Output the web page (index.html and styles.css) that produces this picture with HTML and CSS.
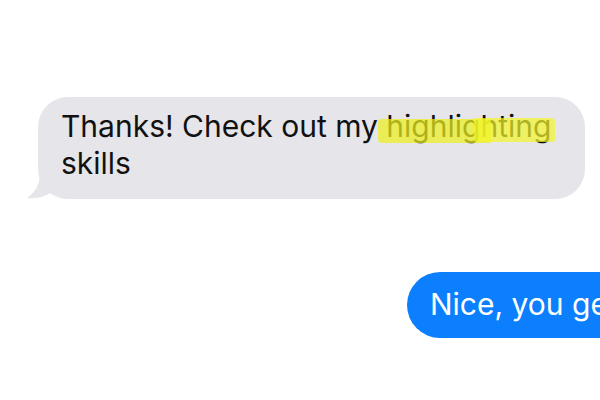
FILE: index.html
```html
<!DOCTYPE html>
<html lang="en">
<head>
  <meta charset="UTF-8" />
  <title>Messages</title>
  <link rel="stylesheet" href="styles.css">
</head>
<body>
  <div class="thread">
    <div class="msg msg-in">
      <p class="bubble">Thanks! Check out my<span class="marker"> highlighting</span> skills</p>
      <svg class="tail" width="30" height="30" viewBox="0 0 30 30">
        <path d="M14 0 C14 12 10 20 1 26 C10 27 18 25 26 20 L26 0 Z" fill="#e5e5ea"/>
      </svg>
    </div>
    <div class="msg msg-out">
      <p class="bubble">Nice, you get the hang of it</p>
    </div>
  </div>
</body>
</html>
```

FILE: styles.css
```css
body {
  margin: 0;
  background-color: #ffffff;
  font-family: Inter, "Noto Sans", sans-serif;
  overflow: hidden;
  width: 600px;
  height: 400px;
}
.thread {
  display: flex;
  flex-direction: column;
  padding-top: 97px;
}
.msg {
  position: relative;
}
.bubble {
  margin: 0;
  font-size: 30px;
  line-height: 37px;
}
.msg-in {
  margin-left: 38px;
  width: 547px;
}
.msg-in .bubble {
  position: relative;
  z-index: 1;
  background-color: #e5e5ea;
  color: #111111;
  border-radius: 30px;
  padding: 11px 24px 17px 23px;
}
.tail {
  position: absolute;
  left: -12px;
  bottom: -3px;
}
.marker {
  position: relative;
}
/* marker stroke drawn over the word, in two passes */
.marker::before,
.marker::after {
  content: "";
  position: absolute;
  top: 11px;
  height: 24px;
}
.marker::before {
  left: 0;
  right: 60px;
  background-color: rgba(236, 240, 30, 0.72);
  border-radius: 3px 2px 2px 4px;
}
.marker::after {
  left: 96px;
  right: -4px;
  top: 10px;
  background-color: rgba(244, 246, 40, 0.7);
  border-radius: 2px 4px 3px 2px;
}
.msg-out {
  margin-top: 73px;
  margin-left: 407px;
}
.msg-out .bubble {
  background-color: #0b7ffe;
  color: #ffffff;
  border-radius: 33px;
  padding: 14px 23px 15px;
  white-space: nowrap;
  width: max-content;
}
```
